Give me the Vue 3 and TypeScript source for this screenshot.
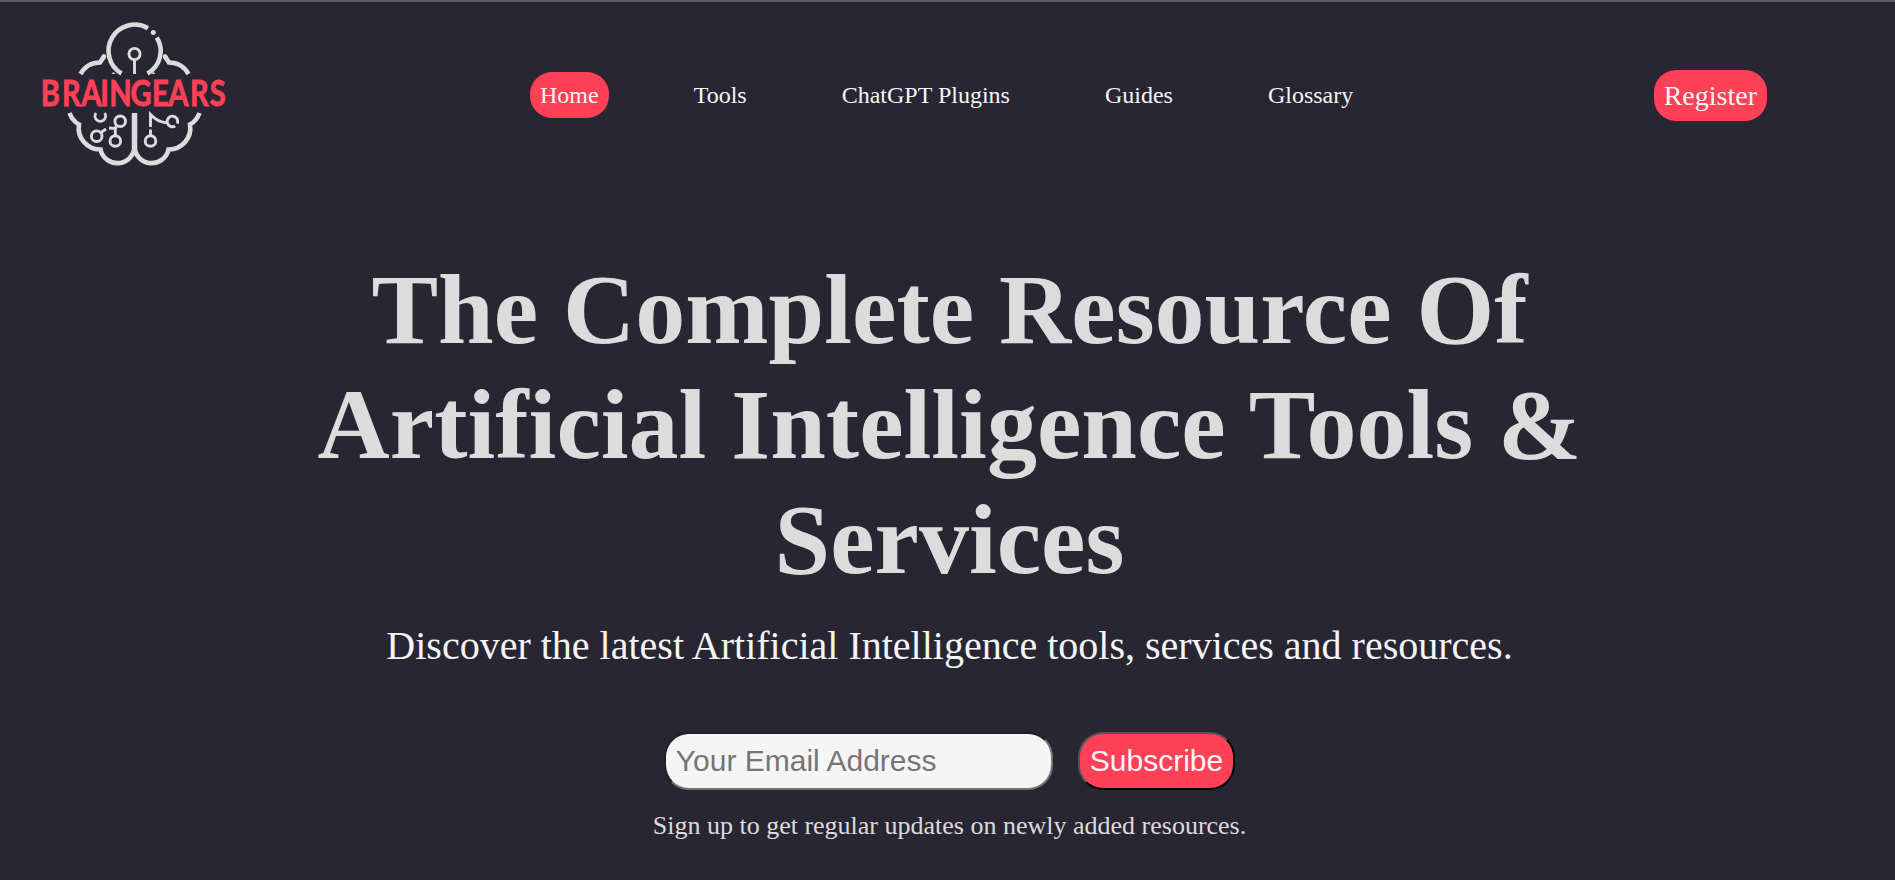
<script setup lang="ts">
import { ref } from 'vue'

const links: string[] = ['Home', 'Tools', 'ChatGPT Plugins', 'Guides', 'Glossary']
const active = ref('Home')
const email = ref('')
</script>

<template>
  <div class="page">
    <header class="header">
      <svg class="logo" viewBox="0 0 210 180" width="210" height="180" role="img" aria-label="Braingears">
        <g class="line thick">
          <path d="M91.500 73.500 A25.700 25.700 0 1 1 118 28.200" />
          <path d="M126.800 37.500 A25.700 25.700 0 0 1 117.500 73.500" />
          <path d="M50.500 74 Q57 62.500 70 62.500 L74 56.500" />
          <path d="M158.500 74 Q152 62.500 139 62.500 L135 56.500" />
          <path d="M39.500 113 Q42.500 121 49 124.500 A21.500 21.500 0 0 0 70.500 149.500 A17.200 17.200 0 0 0 104.500 147" />
          <path d="M169.500 113 Q166.500 121 160 124.500 A21.500 21.500 0 0 1 138.500 149.500 A17.200 17.200 0 0 1 104.500 147" />
          <path class="tip" d="M73 58 L74 56.500 M136 58 L135 56.500" />
        </g>
        <path class="line stem" d="M104.500 113 V149" />
        <circle class="fill" cx="123.300" cy="32.500" r="2.500" />
        <path class="fill" d="M81.500 74 l2 -2 l2 2z M121.500 74 l2 -2 l2 2z" />
        <g class="line thin">
          <circle cx="104.500" cy="54" r="5.600" />
          <path d="M104.500 60 V74" />
          <path d="M66 113 A5.300 5.300 0 1 0 74.600 113" />
          <circle cx="90.200" cy="121.300" r="5.300" />
          <circle cx="66.700" cy="136.200" r="5.300" />
          <circle cx="85.300" cy="141" r="5.300" />
          <path d="M71 132.500 L76 129 M79 128 L85.500 128.500 M86.500 125.500 L85.300 129 V136" />
          <circle cx="120.500" cy="141" r="5.300" />
          <path d="M120.500 136 V129.500 M120.500 127 V114.500 Q128 122.500 137 122.800" />
          <path d="M147.300 123.600 A5.300 5.300 0 1 0 145.200 126" />
        </g>
        <g transform="scale(0.82 1)">
          <text
            class="wordmark"
            y="106.200"
            x="13.200 38.900 62.600 85.800 96.700 122.600 148.800 168.700 195.100 219.200"
          >BRAINGEARS</text>
        </g>
      </svg>

      <nav class="nav">
        <a
          v-for="link in links"
          :key="link"
          class="nav-link"
          :class="{ active: link === active }"
          @click="active = link"
        >{{ link }}</a>
      </nav>

      <a class="register">Register</a>
    </header>

    <main class="hero">
      <h1 class="title">The Complete Resource Of Artificial Intelligence Tools &amp; Services</h1>
      <p class="subtitle">Discover the latest Artificial Intelligence tools, services and resources.</p>
      <form class="form" @submit.prevent>
        <input v-model="email" class="email" type="email" placeholder="Your Email Address" />
        <button class="subscribe" type="submit">Subscribe</button>
      </form>
      <p class="note">Sign up to get regular updates on newly added resources.</p>
    </main>
  </div>
</template>

<style>
body {
  margin: 0;
  background: #292634;
}
</style>

<style scoped>
.page {
  box-sizing: border-box;
  height: 880px;
  overflow: hidden;
  border-top: 2px solid #585c68;
  background: #292634;
  font-family: "Liberation Serif", "Times New Roman", serif;
}
.header {
  display: flex;
  align-items: flex-start;
  height: 178px;
}
.logo {
  flex: none;
  margin: -2px 0 0 30px;
  overflow: visible;
}
.line {
  fill: none;
  stroke: #dcdcdc;
}
.thick {
  stroke-width: 4.6;
}
.tip {
  stroke-linecap: round;
}
.stem {
  stroke-width: 5.5;
}
.thin {
  stroke-width: 2.900;
}
.fill {
  fill: #dcdcdc;
}
.wordmark {
  fill: #ff4057;
  font: 700 35.500px Lato, sans-serif;
  stroke: #ff4057;
  stroke-width: 0.800;
}
.nav {
  display: flex;
  gap: 75px;
  margin: 70px 0 0 290px;
}
.nav-link {
  padding: 10px;
  border-radius: 22px;
  color: #f5f5f5;
  font-size: 24px;
  line-height: 26px;
  white-space: nowrap;
}
.active {
  background: #ff4057;
}
.register {
  margin: 68px 128px 0 auto;
  padding: 10px;
  border-radius: 22px;
  background: #ff4057;
  color: #f5f5f5;
  font-size: 28px;
  line-height: 31px;
}
.hero {
  display: flex;
  flex-direction: column;
  align-items: center;
  padding-left: 4px;
}
.title {
  width: 1300px;
  margin: 72px 0 0;
  color: #dcdcdc;
  font-size: 100px;
  font-weight: 700;
  line-height: 115px;
  text-align: center;
}
.subtitle {
  margin: 26px 0 0;
  color: #f5f5f5;
  font-size: 40px;
  line-height: 46px;
}
.form {
  display: flex;
  gap: 25px;
  margin-top: 63px;
}
.email {
  box-sizing: border-box;
  width: 389px;
  height: 58px;
  padding: 10px;
  border: 2px inset #767676;
  border-radius: 25px;
  background: #f5f5f5;
  font: 30px "Liberation Sans", Arial, sans-serif;
}
.email::placeholder {
  color: #757575;
}
.subscribe {
  box-sizing: border-box;
  height: 58px;
  padding: 10px;
  border: 2px outset #000;
  border-radius: 25px;
  background: #ff4057;
  color: #f5f5f5;
  font: 30px "Liberation Sans", Arial, sans-serif;
}
.note {
  margin: 21px 0 0;
  color: #dcdcdc;
  font-size: 26px;
  line-height: 30px;
}
</style>
